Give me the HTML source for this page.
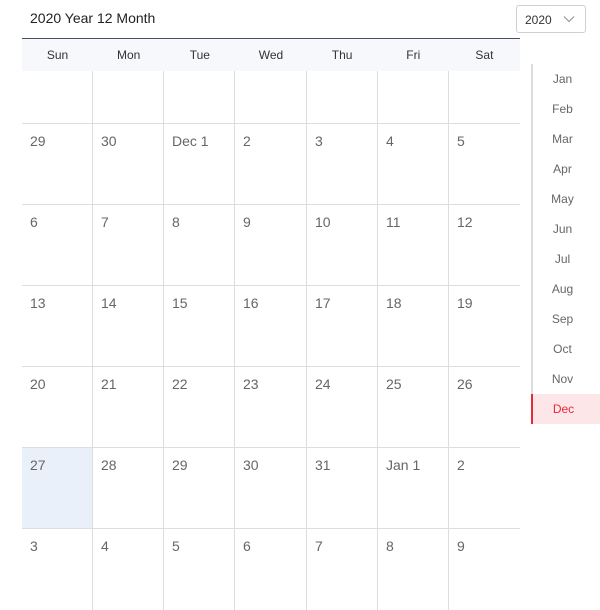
<!DOCTYPE html>
<html><head><style>
*{margin:0;padding:0;box-sizing:border-box}
body{width:600px;height:600px;overflow:hidden;background:#fff;font-family:"Liberation Sans",sans-serif;position:relative}
.title{position:absolute;left:30px;top:10px;font-size:14px;color:#222}
.sel{position:absolute;left:516px;top:5px;width:70px;height:28px;border:1px solid #d0d0d0;border-radius:3px;font-size:12px;color:#333;padding:7px 0 0 8px}
.sel svg{position:absolute;right:10px;top:9px}
.hdr{position:absolute;left:22px;top:38px;width:498px;height:33px;background:#f7f8fc;border-top:1px solid #4a5060}
.hdr div,.cell{position:absolute}
.hdr div{top:9px;width:71.14px;text-align:center;font-size:12px;color:#333}
.cell{font-size:14px;color:#666;padding:9px 0 0 8px;border-left:1px solid #ddd;border-bottom:1px solid #ddd}
.side{position:absolute;left:531px;top:64px;width:2px;height:360px;background:#ddd}
.m{position:absolute;left:531px;width:69px;height:30px;text-align:center;font-size:12px;color:#666;line-height:30px;padding-right:6px}
.m.on{background:#fde6e8;color:#e8283c;border-left:2px solid #e8283c}
</style></head><body>
<div class="title">2020 Year 12 Month</div>
<div class="sel">2020<svg width="12" height="8" viewBox="0 0 12 8"><path d="M1 1.5L6 6.5L11 1.5" fill="none" stroke="#999" stroke-width="1.2"/></svg></div>
<div class="hdr">
<div style="left:0">Sun</div><div style="left:71.14px">Mon</div><div style="left:142.28px">Tue</div><div style="left:213.43px">Wed</div><div style="left:284.57px">Thu</div><div style="left:355.71px">Fri</div><div style="left:426.86px">Sat</div>
</div>
<div id="g"></div>
<div class="side"></div>
<div class="m" style="top:64px">Jan</div><div class="m" style="top:94px">Feb</div><div class="m" style="top:124px">Mar</div><div class="m" style="top:154px">Apr</div><div class="m" style="top:184px">May</div><div class="m" style="top:214px">Jun</div><div class="m" style="top:244px">Jul</div><div class="m" style="top:274px">Aug</div><div class="m" style="top:304px">Sep</div><div class="m" style="top:334px">Oct</div><div class="m" style="top:364px">Nov</div><div class="m on" style="top:394px">Dec</div>
<script>
var rows=[["","","","","","",""],["29","30","Dec 1","2","3","4","5"],["6","7","8","9","10","11","12"],["13","14","15","16","17","18","19"],["20","21","22","23","24","25","26"],["27","28","29","30","31","Jan 1","2"],["3","4","5","6","7","8","9"]];
var tops=[71,124,205,286,367,448,529],h="";
var xs=[22,92,163,234,306,377,448,520];
for(var r=0;r<7;r++)for(var c=0;c<7;c++){
var t=tops[r];var hh=r==0?53:81;
h+='<div class="cell" style="left:'+xs[c]+'px;top:'+t+'px;width:'+(xs[c+1]-xs[c])+'px;height:'+hh+'px;'+(c==0?'border-left:none;':'')+(r==5&&c==0?'background:#eaf0fa;':'')+(r==6?'border-bottom:none;':'')+'">'+rows[r][c]+'</div>';}
document.getElementById('g').innerHTML=h;
</script>
</body></html>
